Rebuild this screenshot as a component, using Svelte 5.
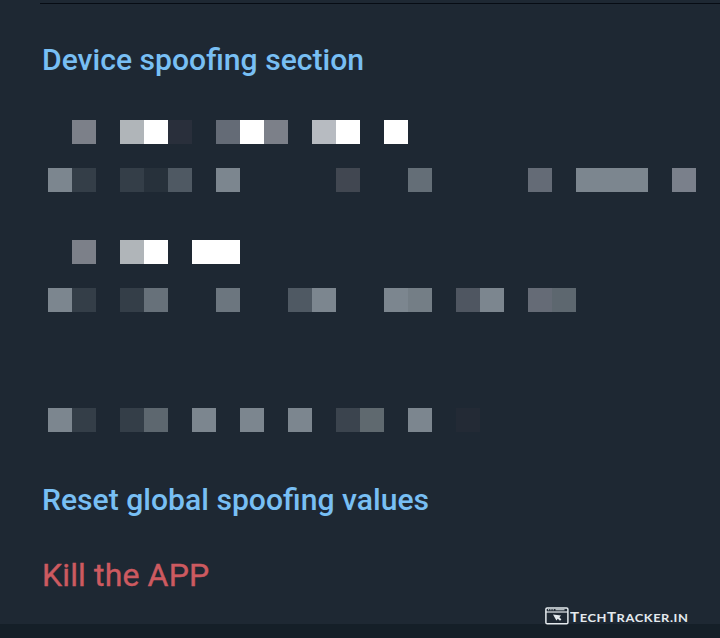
<script>
  // Each tile is [column, colour, span]; a column is 24px wide.
  const groups = [
    {
      id: 'device',
      rows: [
        [[2, '#7c8089'], [4, '#b0b5b9'], [5, '#ffffff'], [6, '#292f3b'], [8, '#646b76'], [9, '#ffffff'], [10, '#7c8089'], [12, '#b7bbc1'], [13, '#ffffff'], [15, '#ffffff']],
        [[1, '#7c868f'], [2, '#343e48'], [4, '#343e48'], [5, '#27313b'], [6, '#4f5963'], [8, '#7c868f'], [13, '#414751'], [16, '#646e77'], [21, '#646b76'], [23, '#7c868f', 3], [27, '#7a808b']]
      ]
    },
    {
      id: 'values',
      rows: [
        [[2, '#7c8089'], [4, '#b0b5b9'], [5, '#ffffff'], [7, '#ffffff', 2]],
        [[1, '#7c868f'], [2, '#343e48'], [4, '#343e48'], [5, '#67717a'], [8, '#6c767f'], [11, '#4f5963'], [12, '#7c868f'], [15, '#7c868f'], [16, '#747e86'], [18, '#4f5661'], [19, '#7c868f'], [21, '#656b76'], [22, '#5d676f']]
      ]
    },
    {
      id: 'note',
      rows: [
        [[1, '#7c868f'], [2, '#343e48'], [4, '#343e48'], [5, '#5d676f'], [7, '#7c868f'], [9, '#7c868f'], [11, '#7c868f'], [13, '#3b444e'], [14, '#5f696f'], [16, '#7c868f'], [18, '#232a35']]
      ]
    }
  ];
</script>

<main>
  <hr />
  <h2 class="heading">Device spoofing section</h2>

  <div class="entries">
    {#each groups as group (group.id)}
      <div class="entry {group.id}">
        {#each group.rows as row}
          <div class="row">
            {#each row as [column, colour, span = 1]}
              <i style="grid-column: {column} / span {span}; background: {colour}"></i>
            {/each}
          </div>
        {/each}
      </div>
    {/each}
  </div>

  <div class="action reset">Reset global spoofing values</div>
  <div class="action kill">Kill the APP</div>

  <footer></footer>

  <div class="brand">
    <svg width="24" height="18" viewBox="0 0 24 18">
      <rect x="0.9" y="0.9" width="22" height="15.8" rx="1.3" fill="none" stroke="#e4eaee" stroke-width="1.5" />
      <path d="M1 5H23" stroke="#e4eaee" stroke-width="1.2" />
      <path d="M3 2.8H4.2M5.3 2.8H6.5M7.6 2.8H8.8M10.5 2.8H19.5" stroke="#e4eaee" stroke-width="1.1" />
      <path d="M8 7.6L16 8.6L14.4 10.2L16.4 12.4L15 13.8L12.8 11.8L11.4 13.4Z" fill="#e4eaee" />
    </svg>
    <span class="name">T<small>ECH</small>T<small>RACKER.IN</small></span>
  </div>
</main>

<style>
  :global(body) {
    background: #1e2833;
  }

  main {
    position: relative;
    display: flex;
    flex-direction: column;
    width: 720px;
    height: 638px;
    overflow: hidden;
    background: #1e2833;
    font-family: Roboto, sans-serif;
  }

  hr {
    flex: none;
    width: 680px;
    height: 1px;
    margin: 3px 0 0 40px;
    border: 0;
    background: #070c14;
  }

  .heading,
  .action {
    flex: none;
    margin: 0 0 0 42px;
    height: 40px;
    font-size: 30.13px;
    line-height: 40px;
    font-weight: 500;
    color: #78bff4;
    white-space: nowrap;
  }

  .heading {
    margin-top: 36px;
  }

  .entries {
    display: flex;
    flex-direction: column;
    gap: 48px;
    padding: 40px 0 48px 48px;
  }

  .entry {
    display: flex;
    flex-direction: column;
    gap: 24px;
  }

  .note {
    padding-top: 48px;
  }

  .row {
    display: grid;
    grid-template-columns: repeat(28, 24px);
    grid-template-rows: 24px;
  }

  .kill {
    margin-top: 35px;
    font-size: 32px;
    font-weight: 400;
    letter-spacing: 0.14px;
    color: #cd5a60;
    -webkit-text-stroke: 0.4px #cd5a60;
  }

  footer {
    height: 14px;
    margin-top: auto;
    background: #151f28;
  }

  .brand {
    position: absolute;
    left: 545px;
    top: 607px;
    display: flex;
    color: #e4eaee;
  }

  .name {
    margin-left: 1px;
    font: 700 13.5px/20px Lato, sans-serif;
    letter-spacing: 0.5px;
    transform: scaleX(1.12);
    transform-origin: left;
  }

  small {
    font-size: 11.5px;
  }
</style>
